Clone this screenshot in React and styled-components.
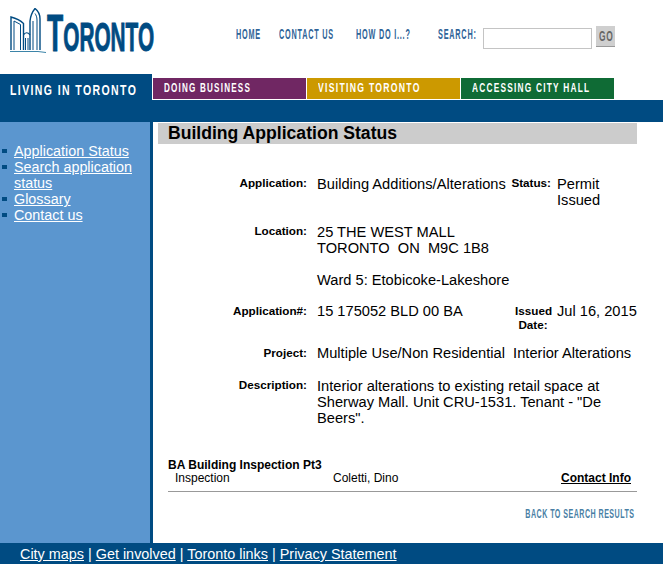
import React from 'react';
import styled, { createGlobalStyle } from 'styled-components';

const navy = '#004b82';

const GlobalStyle = createGlobalStyle`
  html, body {
    margin: 0;
    padding: 0;
    background: #fff;
    font-family: "Liberation Sans", Arial, sans-serif;
    color: #000;
  }
`;

const Page = styled.div`
  width: 663px;
  height: 572px;
  overflow: hidden;
`;

// the site's banner face is a condensed one, no such font here so squeeze the text
const Squeezed = styled.span`
  display: inline-block;
  white-space: nowrap;
  transform: scaleX(${({ $x }) => $x});
  transform-origin: ${({ $origin }) => $origin || 'left'} center;
`;

const Header = styled.header`
  height: 74px;
  display: flex;
`;

const Logo = styled.div`
  width: 236px;
  flex: none;
  padding: 8px 0 0 10px;
  box-sizing: border-box;
  display: flex;
  align-items: flex-start;
`;

const LogoMark = styled.svg`
  flex: none;
  width: 36px;
  height: 45px;
`;

const LogoWord = styled.div`
  flex: none;
  width: 107px;
  margin: 2px 0 0 1px;
  font-weight: 700;
  font-size: 40px;
  line-height: 48px;
  color: ${navy};
  -webkit-text-stroke: 1px ${navy};
`;

const LogoInitial = styled.span`
  font-size: 51px;
`;

const TopLinks = styled.nav`
  display: flex;
  align-items: flex-start;
  padding-top: 26px;
`;

const TopLink = styled.a`
  flex: none;
  width: ${({ $width }) => $width}px;
  font-weight: 700;
  font-size: 14px;
  line-height: 16px;
  letter-spacing: 1.5px;
  color: #2f6498;
`;

const SearchInput = styled.div`
  width: 109px;
  height: 21px;
  flex: none;
  box-sizing: border-box;
  margin: 2px 4px 0 0;
  border: 1px solid #c4c4c4;
`;

const GoButton = styled.div`
  width: 19px;
  height: 21px;
  flex: none;
  padding-left: 3px;
  box-sizing: border-box;
  background: #cfcfcf;
  border-bottom: 1px solid #999;
  font-size: 14px;
  font-weight: 700;
  line-height: 21px;
  letter-spacing: 1px;
  color: #666;
`;

const NavBar = styled.div`
  height: 48px;
  display: flex;
  align-items: flex-start;
  background: linear-gradient(#fff 26px, ${navy} 26px);
`;

const CurrentTab = styled.div`
  width: 152px;
  height: 48px;
  flex: none;
  background: ${navy};
  padding: 7px 0 0 10px;
  box-sizing: border-box;
  font-weight: 700;
  font-size: 15px;
  line-height: 18px;
  letter-spacing: 2px;
  color: #fff;
`;

const Tab = styled.div`
  width: 154px;
  height: 22px;
  flex: none;
  margin-top: 4px;
  box-sizing: border-box;
  background: ${({ $color }) => $color};
  border-left: 1px solid #fff;
  border-bottom: 1px solid #fff;
  padding-left: 11px;
  font-weight: 700;
  font-size: 13.5px;
  line-height: 20px;
  letter-spacing: 2px;
  color: #fff;
`;

const Main = styled.div`
  height: 421px;
  display: flex;
`;

const Sidebar = styled.aside`
  width: 150px;
  flex: none;
  border-right: 3px solid ${navy};
  background: #5b96cf;
  padding-top: 21px;
`;

const SideList = styled.ul`
  list-style: none;
  margin: 0;
  padding: 0 0 0 14px;
`;

const SideItem = styled.li`
  position: relative;
  font-size: 14.35px;
  line-height: 16px;

  &::before {
    content: '';
    position: absolute;
    left: -12px;
    top: 6px;
    width: 5px;
    height: 4px;
    background: ${navy};
  }
`;

const WhiteLink = styled.a`
  color: #fff;
  text-decoration: underline;
`;

const Content = styled.main`
  flex: 1;
  padding: 1px 26px 0 5px;
`;

const Title = styled.h1`
  margin: 0;
  height: 21px;
  padding-left: 10px;
  background: #ccc;
  font-size: 17.6px;
  line-height: 21px;
  font-weight: 700;
`;

const Details = styled.div`
  padding: 32px 0 0 10px;
`;

const Row = styled.div`
  display: grid;
  grid-template-columns: 139px 200px 44px 1fr;
  margin-bottom: ${({ $after }) => $after}px;
`;

const Label = styled.div`
  padding-top: ${({ $drop }) => ($drop ? '1px' : '0')};
  font-size: 11.7px;
  line-height: 14px;
  font-weight: 700;
  text-align: right;
`;

const SideLabel = styled(Label)`
  text-align: ${({ $center }) => ($center ? 'center' : 'right')};
  padding-left: ${({ $center }) => ($center ? '8px' : '0')};
`;

const Value = styled.div`
  grid-column: ${({ $wide }) => ($wide ? '2 / 5' : 'auto')};
  padding-left: ${({ $side }) => ($side ? '6px' : '10px')};
  font-size: 14.65px;
  line-height: 16px;
  white-space: pre-wrap;
`;

const Inspection = styled.section`
  margin: 0 0 0 10px;
  padding-bottom: 6px;
  border-bottom: 1px solid #999;
`;

const InspectionName = styled.div`
  font-size: 12px;
  line-height: 14px;
  font-weight: 700;
`;

const InspectionRow = styled.div`
  display: grid;
  grid-template-columns: 158px 1fr auto;
  padding: 0 6px 0 7px;
  font-size: 12px;
  line-height: 13px;
`;

const ContactLink = styled.a`
  font-weight: 700;
  color: #000;
  text-decoration: underline;
`;

const BackLink = styled.a`
  display: block;
  margin-top: 14px;
  padding-right: 3px;
  text-align: right;
  font-size: 12.5px;
  line-height: 16px;
  letter-spacing: 0.8px;
  font-weight: 700;
  color: #4a7fa5;
`;

const Footer = styled.footer`
  height: 21px;
  background: ${navy};
  padding-left: 20px;
  font-size: 14.4px;
  line-height: 22px;
  color: #fff;
  white-space: pre;
`;

const CityHallIcon = () => (
  <LogoMark viewBox="0 0 36 45" fill="none" stroke={navy} strokeWidth="1.4">
    <path d="M1 42V9C5 10 10 12 13.5 15.5V42" />
    <path d="M4 42V13L10.5 16.5V42" strokeWidth="1" />
    <path d="M30 42V11C30 6 27 2 25 0.5C23 3 20.5 8 20 13V42" />
    <path d="M27 42V12C27 9 26 7 25 5.5M23 42V13" strokeWidth="1" />
    <path d="M13.5 27C15 24 18 24 20 27" strokeWidth="1.1" />
    <path d="M15.5 42V30M18 42V30" strokeWidth="1" />
    <path d="M0 43.5H28L36 44.5" stroke="#3b84a8" strokeWidth="1" />
  </LogoMark>
);

const App = () => (
  <Page>
    <GlobalStyle />
    <Header>
      <Logo>
        <CityHallIcon />
        <LogoWord><Squeezed $x={0.52}><LogoInitial>T</LogoInitial>ORONTO</Squeezed></LogoWord>
      </Logo>
      <TopLinks>
        <TopLink $width={43}><Squeezed $x={0.52}>HOME</Squeezed></TopLink>
        <TopLink $width={77}><Squeezed $x={0.52}>CONTACT US</Squeezed></TopLink>
        <TopLink $width={82}><Squeezed $x={0.52}>HOW DO I...?</Squeezed></TopLink>
        <TopLink $width={45}><Squeezed $x={0.52}>SEARCH:</Squeezed></TopLink>
        <SearchInput />
        <GoButton><Squeezed $x={0.6}>GO</Squeezed></GoButton>
      </TopLinks>
    </Header>
    <NavBar>
      <CurrentTab><Squeezed $x={0.7}>LIVING IN TORONTO</Squeezed></CurrentTab>
      <Tab $color="#702763"><Squeezed $x={0.6}>DOING BUSINESS</Squeezed></Tab>
      <Tab $color="#cc9900"><Squeezed $x={0.64}>VISITING TORONTO</Squeezed></Tab>
      <Tab $color="#0f6b35"><Squeezed $x={0.615}>ACCESSING CITY HALL</Squeezed></Tab>
    </NavBar>
    <Main>
      <Sidebar>
        <SideList>
          <SideItem><WhiteLink>Application Status</WhiteLink></SideItem>
          <SideItem><WhiteLink>Search application status</WhiteLink></SideItem>
          <SideItem><WhiteLink>Glossary</WhiteLink></SideItem>
          <SideItem><WhiteLink>Contact us</WhiteLink></SideItem>
        </SideList>
      </Sidebar>
      <Content>
        <Title>Building Application Status</Title>
        <Details>
          <Row $after={16}>
            <Label>Application:</Label>
            <Value>Building Additions/Alterations</Value>
            <SideLabel>Status:</SideLabel>
            <Value $side>Permit Issued</Value>
          </Row>
          <Row $after={15}>
            <Label>Location:</Label>
            <Value $wide>{'25 THE WEST MALL\nTORONTO  ON  M9C 1B8\n\nWard 5: Etobicoke-Lakeshore'}</Value>
          </Row>
          <Row $after={13}>
            <Label $drop>Application#:</Label>
            <Value>15 175052 BLD 00 BA</Value>
            <SideLabel $center $drop>Issued Date:</SideLabel>
            <Value $side>Jul 16, 2015</Value>
          </Row>
          <Row $after={17}>
            <Label $drop>Project:</Label>
            <Value $wide>{'Multiple Use/Non Residential  Interior Alterations'}</Value>
          </Row>
          <Row $after={32}>
            <Label>Description:</Label>
            <Value $wide>Interior alterations to existing retail space at Sherway Mall. Unit CRU-1531. Tenant - "De Beers".</Value>
          </Row>
        </Details>
        <Inspection>
          <InspectionName>BA Building Inspection Pt3</InspectionName>
          <InspectionRow>
            <span>Inspection</span>
            <span>Coletti, Dino</span>
            <ContactLink>Contact Info</ContactLink>
          </InspectionRow>
        </Inspection>
        <BackLink><Squeezed $x={0.57} $origin="right">BACK TO SEARCH RESULTS</Squeezed></BackLink>
      </Content>
    </Main>
    <Footer>
      <WhiteLink>City maps</WhiteLink> | <WhiteLink>Get involved</WhiteLink> | <WhiteLink>Toronto links</WhiteLink> | <WhiteLink>Privacy Statement</WhiteLink>
    </Footer>
  </Page>
);

export default App;
